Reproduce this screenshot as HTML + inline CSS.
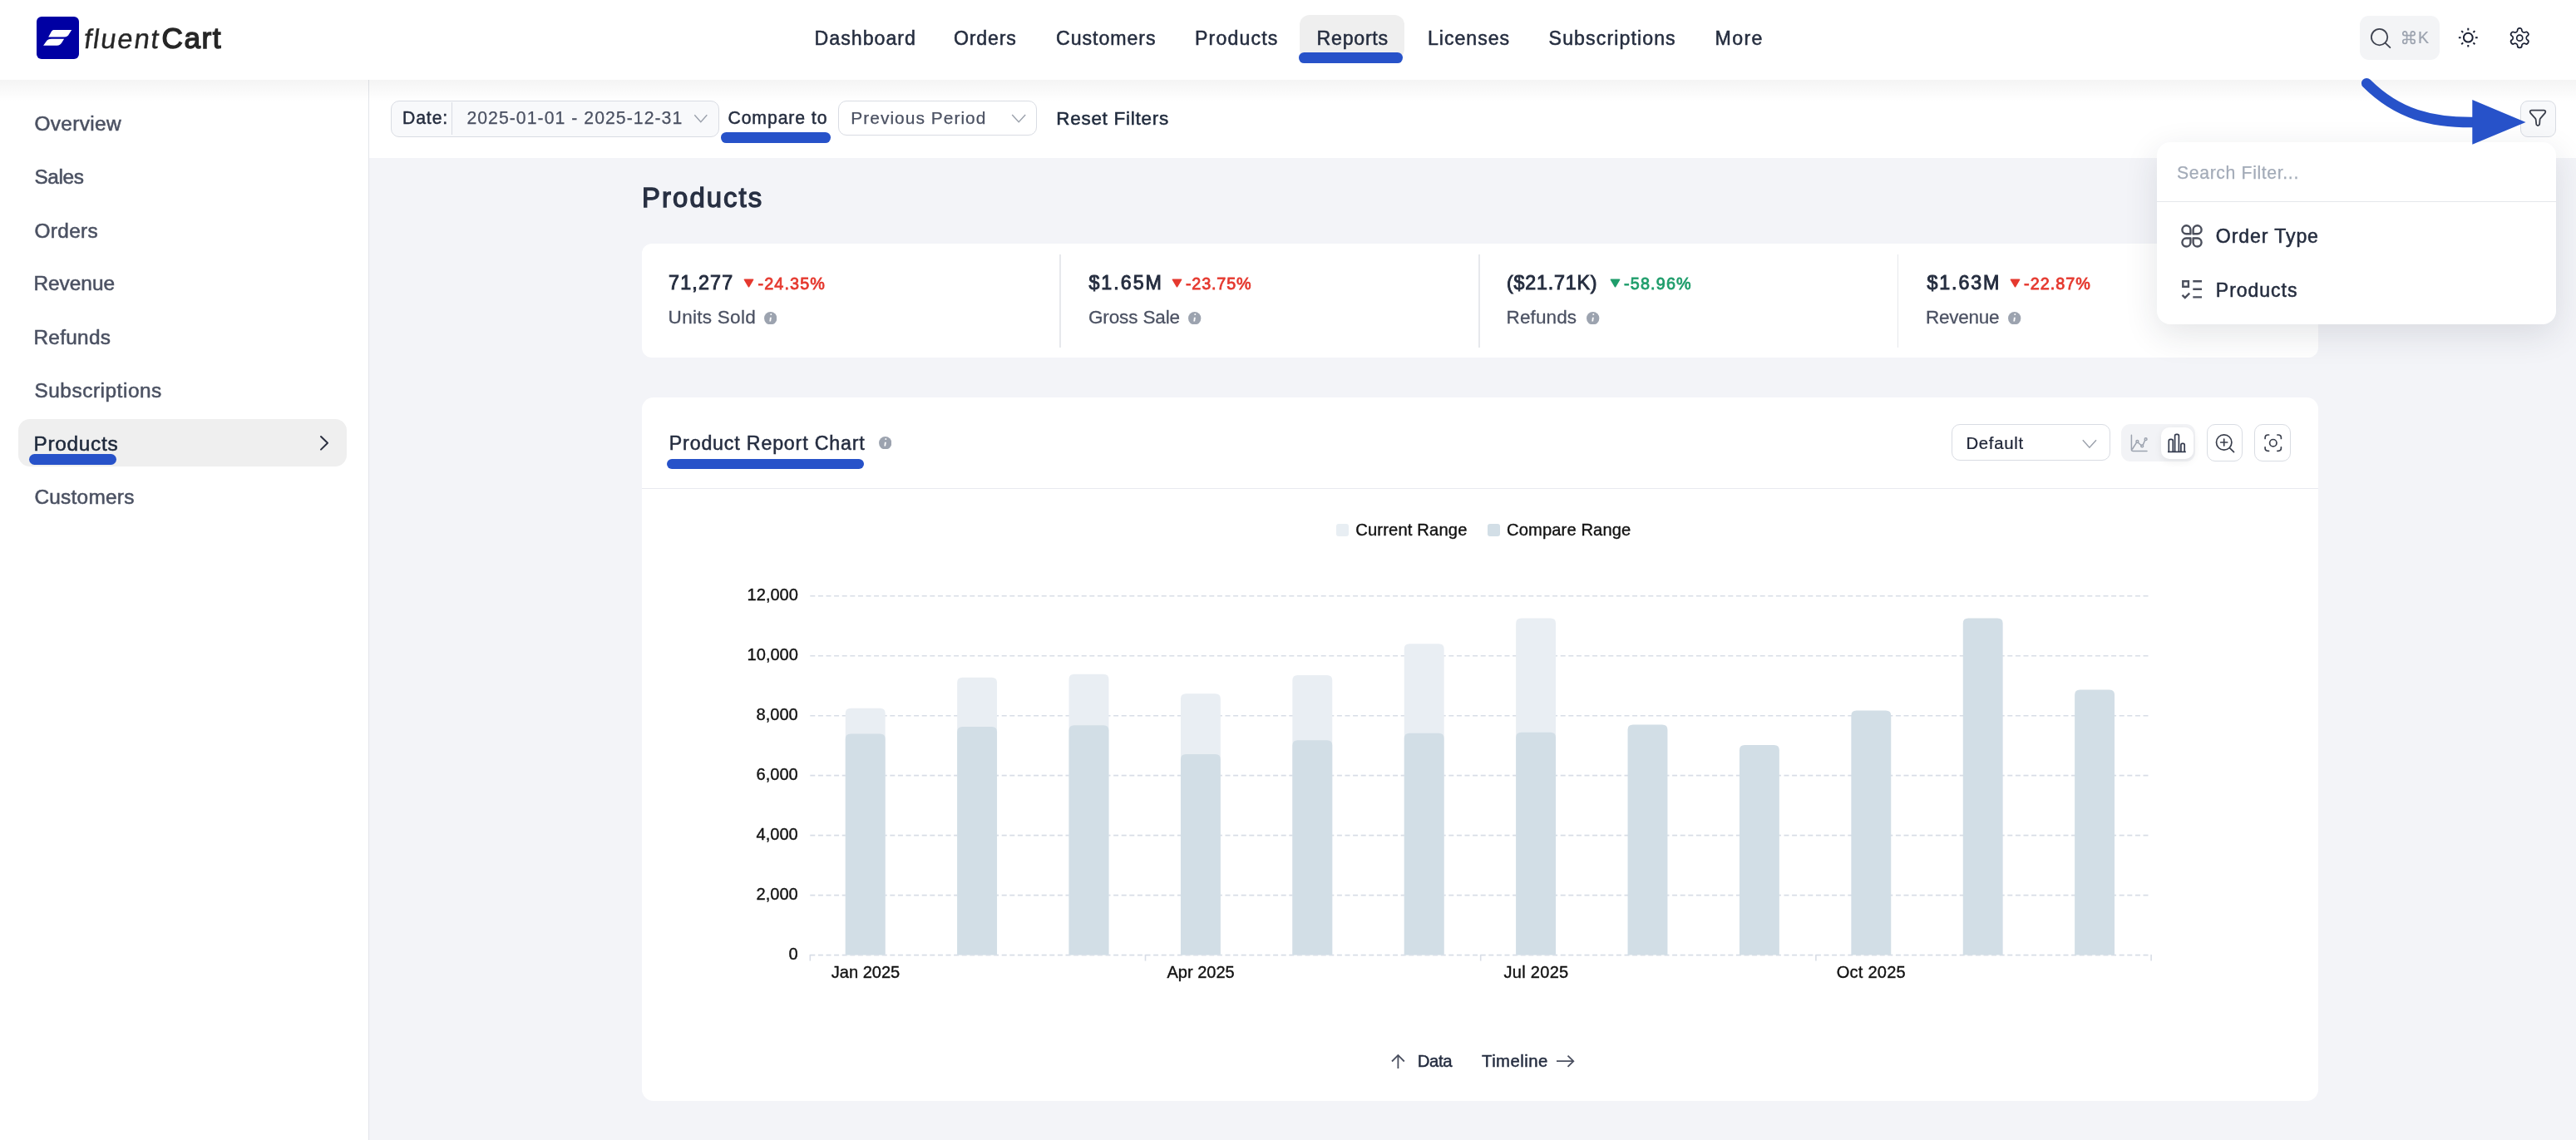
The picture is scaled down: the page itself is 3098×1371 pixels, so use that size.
<!DOCTYPE html><html><head><meta charset="utf-8"><style>
*{margin:0;padding:0;box-sizing:border-box}
html,body{width:3098px;height:1371px;overflow:hidden;background:#f3f4f8;font-family:"Liberation Sans",sans-serif}
.a{position:absolute}
.t{position:absolute;line-height:1;white-space:nowrap}
.bar{position:absolute;background:#2752c9;border-radius:7px}
</style></head><body><div style="position:absolute;left:0;top:0;width:3098px;height:1371px;will-change:transform">

<div class="a" style="left:0;top:0;width:3098px;height:96px;background:#fff"></div>
<div class="a" style="left:0;top:96px;width:444px;height:1275px;background:#fff;border-right:1px solid #e3e5ea"></div>
<div class="a" style="left:444px;top:96px;width:2654px;height:94px;background:#fff"></div>
<div class="a" style="left:0;top:96px;width:3098px;height:26px;background:linear-gradient(rgba(0,0,0,0.045),rgba(0,0,0,0))"></div>
<svg class="a" style="left:0;top:0" width="300" height="96" viewBox="0 0 300 96">
<rect x="44" y="20" width="51" height="51" rx="6" fill="#0000a3"/>
<path d="M64.5 35.9 L86.2 35.9 L83 41 Q81.5 44.4 77.5 44.4 L58.2 44.5 L61 39.5 Q62.5 35.9 64.5 35.9Z" fill="#fff"/>
<path d="M62 46.8 L77.1 46.8 L74.5 51 Q72.5 54.7 68.5 54.7 L52.1 54.7 L55.5 50 Q57.5 46.8 62 46.8Z" fill="#fff"/>
</svg>
<div class="a" style="left:1562.5px;top:18px;width:126px;height:53px;border-radius:12px;background:#efefef"></div>
<div class="a" style="left:2838px;top:19px;width:96px;height:53px;border-radius:11px;background:#f3f4f6"></div>
<svg class="a" style="left:2840px;top:25px" width="260" height="45" viewBox="2840 25 260 45">
<circle cx="2861.6" cy="44.6" r="9.7" fill="none" stroke="#3f4350" stroke-width="1.8"/>
<path d="M2868.8 51.8 L2874.4 57.2" stroke="#3f4350" stroke-width="1.8" stroke-linecap="round"/>
<g transform="translate(2887.4 35.5) scale(0.80)" fill="none" stroke="#9ca3af" stroke-width="2.1" stroke-linecap="round" stroke-linejoin="round">
<path d="M15 6v12a3 3 0 1 0 3-3H6a3 3 0 1 0 3 3V6a3 3 0 1 0-3 3h12a3 3 0 1 0-3-3"/></g>
<g fill="none" stroke="#1a2033" stroke-width="2"><circle cx="2968.3" cy="45.2" r="5.4"/><path d="M2977.00 45.20L2979.70 45.20M2974.45 51.35L2976.36 53.26M2968.30 53.90L2968.30 56.60M2962.15 51.35L2960.24 53.26M2959.60 45.20L2956.90 45.20M2962.15 39.05L2960.24 37.14M2968.30 36.50L2968.30 33.80M2974.45 39.05L2976.36 37.14" stroke-width="2"/></g>
<g transform="translate(3016.2 31.6) scale(1.17)" fill="none" stroke="#1a2033" stroke-width="1.45" stroke-linecap="round" stroke-linejoin="round">
<path d="M12.22 2h-.44a2 2 0 0 0-2 2v.18a2 2 0 0 1-1 1.73l-.43.25a2 2 0 0 1-2 0l-.15-.08a2 2 0 0 0-2.73.73l-.22.38a2 2 0 0 0 .73 2.73l.15.1a2 2 0 0 1 1 1.72v.51a2 2 0 0 1-1 1.74l-.15.09a2 2 0 0 0-.73 2.73l.22.38a2 2 0 0 0 2.730.73l.15-.08a2 2 0 0 1 2 0l.43.25a2 2 0 0 1 1 1.73V20a2 2 0 0 0 2 2h.44a2 2 0 0 0 2-2v-.18a2 2 0 0 1 1-1.73l.43-.25a2 2 0 0 1 2 0l.15.08a2 2 0 0 0 2.73-.73l.22-.39a2 2 0 0 0-.73-2.73l-.15-.08a2 2 0 0 1-1-1.74v-.5a2 2 0 0 1 1-1.74l.15-.09a2 2 0 0 0 .73-2.73l-.22-.38a2 2 0 0 0-2.73-.73l-.15.08a2 2 0 0 1-2 0l-.43-.25a2 2 0 0 1-1-1.73V4a2 2 0 0 0-2-2z"/>
<circle cx="12" cy="12" r="3"/></g>
</svg>
<div class="a" style="left:470px;top:120.5px;width:394.5px;height:44px;border-radius:10px;background:#f8f9fb;border:1.5px solid #d9dce3"></div>
<div class="a" style="left:542.7px;top:123px;width:1.5px;height:39px;background:#d9dce3"></div>
<div class="a" style="left:1007.5px;top:121.3px;width:239px;height:42.2px;border-radius:10px;background:#fff;border:1.5px solid #d9dce3"></div>
<div class="a" style="left:3030.5px;top:120.5px;width:43px;height:44px;border-radius:9px;background:#f8f9fb;border:1.5px solid #d9dce3"></div>
<svg class="a" style="left:800px;top:120px" width="500" height="40" viewBox="800 120 500 40">
<path d="M835.3 138.3 L842.8 146.6 L850.3 138.3" fill="none" stroke="#9aa0ab" stroke-width="1.4"/>
<path d="M1217.2 138 L1225.2 146.8 L1233.2 138" fill="none" stroke="#9aa0ab" stroke-width="1.4"/>
</svg>
<svg class="a" style="left:3035px;top:125px" width="35" height="35" viewBox="3035 125 35 35">
<path d="M3044.5 132.7 L3059.5 132.7 Q3062.2 133 3060.8 135.8 L3055.2 142.3 Q3054.5 143.2 3054.5 144.5 L3054.2 149 Q3053.8 151.3 3051.8 151 Q3050 150.5 3050.2 148.6 L3049.8 144.5 Q3049.8 143.2 3049 142.3 L3043.2 135.8 Q3041.8 133 3044.5 132.7Z" fill="none" stroke="#3a3f4c" stroke-width="1.8" stroke-linejoin="round"/>
</svg>
<div class="a" style="left:22px;top:504px;width:395px;height:57px;border-radius:14px;background:#efefef"></div>
<svg class="a" style="left:380px;top:520px" width="20" height="26" viewBox="380 520 20 26">
<path d="M386 525 L394 532.8 L386 540.6" fill="none" stroke="#2b3040" stroke-width="2" stroke-linecap="round" stroke-linejoin="round"/></svg>
<div class="a" style="left:772px;top:292.5px;width:2016px;height:137px;border-radius:12px;background:#fff"></div>
<div class="a" style="left:1274.0px;top:306px;width:1.5px;height:112px;background:#e6e8ec"></div>
<div class="a" style="left:1778.2px;top:306px;width:1.5px;height:112px;background:#e6e8ec"></div>
<div class="a" style="left:2281.8px;top:306px;width:1.5px;height:112px;background:#e6e8ec"></div>
<div class="a" style="left:772px;top:478px;width:2016px;height:846px;border-radius:14px;background:#fff"></div>
<div class="a" style="left:772px;top:586.5px;width:2016px;height:1.5px;background:#e8eaef"></div>
<div class="a" style="left:2346.5px;top:510px;width:191px;height:44px;border-radius:10px;background:#fff;border:1.5px solid #d9dce3"></div>
<div class="a" style="left:2551px;top:510px;width:89px;height:45px;border-radius:11px;background:#f2f3f6"></div>
<div class="a" style="left:2599px;top:513.8px;width:39px;height:38.2px;border-radius:10px;background:#fff;box-shadow:0 3px 10px rgba(0,0,0,0.07)"></div>
<div class="a" style="left:2654.3px;top:510px;width:43.2px;height:45px;border-radius:10px;background:#fff;border:1.5px solid #d9dce3"></div>
<div class="a" style="left:2711.4px;top:510px;width:44px;height:45px;border-radius:10px;background:#fff;border:1.5px solid #d9dce3"></div>
<svg class="a" style="left:2490px;top:510px" width="270" height="45" viewBox="2490 510 270 45">
<path d="M2504.8 529.2 L2512.9 538.2 L2521 529.2" fill="none" stroke="#9aa0ab" stroke-width="1.4"/>
<g fill="none" stroke="#9ca3af" stroke-width="1.5" stroke-linecap="round" stroke-linejoin="round">
<path d="M2563.4 523.3 V540.5 Q2563.4 542.5 2565.4 542.5 H2582"/>
<path d="M2564.5 540 L2569.4 532.3 M2571.3 532.2 L2575.3 535.8 M2577.2 535.2 L2579.6 529.5"/>
<circle cx="2570.4" cy="531" r="1.4"/><circle cx="2576.2" cy="536.4" r="1.4"/><circle cx="2580.6" cy="528.2" r="1.4"/>
</g>
<g fill="none" stroke="#333a4d" stroke-width="1.7" stroke-linejoin="round">
<path d="M2608.3 543 V530.2 Q2608.3 528.3 2610.2 528.3 H2611.4 Q2613.3 528.3 2613.3 530.2 V543"/>
<path d="M2615.6 543 V524 Q2615.6 522.3 2617.4 522.3 H2618.6 Q2620.4 522.3 2620.4 524 V543"/>
<path d="M2622.9 543 V535 Q2622.9 533.3 2624.6 533.3 H2625.5 Q2627.2 533.3 2627.2 535 V543"/>
<path d="M2607 543.4 H2628.8"/>
</g>
<g fill="none" stroke="#3a3f4c" stroke-width="1.7" stroke-linecap="round">
<circle cx="2674.7" cy="532" r="9.2"/>
<path d="M2681.4 538.7 L2686.5 543.6 M2674.7 528 V536 M2670.7 532 H2678.7"/>
</g>
<g fill="none" stroke="#3a3f4c" stroke-width="1.7" stroke-linecap="round">
<path d="M2724.1 527.5 V526.5 Q2724.1 523 2727.6 523 H2728.6 M2738.9 523 H2739.9 Q2743.4 523 2743.4 526.5 V527.5 M2743.4 537.8 V538.8 Q2743.4 542.3 2739.9 542.3 H2738.9 M2728.6 542.3 H2727.6 Q2724.1 542.3 2724.1 538.8 V537.8"/>
<circle cx="2733.8" cy="532.7" r="4.2"/>
</g>
</svg>
<div class="a" style="left:1606.7px;top:629.7px;width:15.5px;height:15.5px;border-radius:3px;background:#e8eef3"></div>
<div class="a" style="left:1788.5px;top:629.7px;width:15.9px;height:15.5px;border-radius:3px;background:#d2dee6"></div>
<svg class="a" style="left:0;top:0" width="3098" height="1371" viewBox="0 0 3098 1371">
<line x1="974.3" y1="1148.60" x2="2585" y2="1148.60" stroke="#d8dde6" stroke-width="1.6" stroke-dasharray="6 3.6"/>
<line x1="974.3" y1="1076.62" x2="2585" y2="1076.62" stroke="#d8dde6" stroke-width="1.6" stroke-dasharray="6 3.6"/>
<line x1="974.3" y1="1004.64" x2="2585" y2="1004.64" stroke="#d8dde6" stroke-width="1.6" stroke-dasharray="6 3.6"/>
<line x1="974.3" y1="932.66" x2="2585" y2="932.66" stroke="#d8dde6" stroke-width="1.6" stroke-dasharray="6 3.6"/>
<line x1="974.3" y1="860.68" x2="2585" y2="860.68" stroke="#d8dde6" stroke-width="1.6" stroke-dasharray="6 3.6"/>
<line x1="974.3" y1="788.70" x2="2585" y2="788.70" stroke="#d8dde6" stroke-width="1.6" stroke-dasharray="6 3.6"/>
<line x1="974.3" y1="716.72" x2="2585" y2="716.72" stroke="#d8dde6" stroke-width="1.6" stroke-dasharray="6 3.6"/>
<line x1="974.30" y1="1148" x2="974.30" y2="1155.6" stroke="#d8dde6" stroke-width="1.6"/>
<line x1="1377.50" y1="1148" x2="1377.50" y2="1155.6" stroke="#d8dde6" stroke-width="1.6"/>
<line x1="1780.70" y1="1148" x2="1780.70" y2="1155.6" stroke="#d8dde6" stroke-width="1.6"/>
<line x1="2183.90" y1="1148" x2="2183.90" y2="1155.6" stroke="#d8dde6" stroke-width="1.6"/>
<line x1="2587.10" y1="1148" x2="2587.10" y2="1155.6" stroke="#d8dde6" stroke-width="1.6"/>
<path d="M1016.75 1148.60 V858.00 Q1016.75 851.70 1023.05 851.70 H1058.35 Q1064.65 851.70 1064.65 858.00 V1148.60 Z" fill="#e9eef3"/>
<path d="M1151.15 1148.60 V821.00 Q1151.15 814.70 1157.45 814.70 H1192.75 Q1199.05 814.70 1199.05 821.00 V1148.60 Z" fill="#e9eef3"/>
<path d="M1285.55 1148.60 V817.10 Q1285.55 810.80 1291.85 810.80 H1327.15 Q1333.45 810.80 1333.45 817.10 V1148.60 Z" fill="#e9eef3"/>
<path d="M1419.95 1148.60 V840.60 Q1419.95 834.30 1426.25 834.30 H1461.55 Q1467.85 834.30 1467.85 840.60 V1148.60 Z" fill="#e9eef3"/>
<path d="M1554.35 1148.60 V818.20 Q1554.35 811.90 1560.65 811.90 H1595.95 Q1602.25 811.90 1602.25 818.20 V1148.60 Z" fill="#e9eef3"/>
<path d="M1688.75 1148.60 V780.50 Q1688.75 774.20 1695.05 774.20 H1730.35 Q1736.65 774.20 1736.65 780.50 V1148.60 Z" fill="#e9eef3"/>
<path d="M1823.15 1148.60 V749.70 Q1823.15 743.40 1829.45 743.40 H1864.75 Q1871.05 743.40 1871.05 749.70 V1148.60 Z" fill="#e9eef3"/>
<path d="M1016.75 1148.60 V888.80 Q1016.75 882.50 1023.05 882.50 H1058.35 Q1064.65 882.50 1064.65 888.80 V1148.60 Z" fill="#d2dee6"/>
<path d="M1151.15 1148.60 V880.40 Q1151.15 874.10 1157.45 874.10 H1192.75 Q1199.05 874.10 1199.05 880.40 V1148.60 Z" fill="#d2dee6"/>
<path d="M1285.55 1148.60 V878.60 Q1285.55 872.30 1291.85 872.30 H1327.15 Q1333.45 872.30 1333.45 878.60 V1148.60 Z" fill="#d2dee6"/>
<path d="M1419.95 1148.60 V913.30 Q1419.95 907.00 1426.25 907.00 H1461.55 Q1467.85 907.00 1467.85 913.30 V1148.60 Z" fill="#d2dee6"/>
<path d="M1554.35 1148.60 V896.50 Q1554.35 890.20 1560.65 890.20 H1595.95 Q1602.25 890.20 1602.25 896.50 V1148.60 Z" fill="#d2dee6"/>
<path d="M1688.75 1148.60 V888.10 Q1688.75 881.80 1695.05 881.80 H1730.35 Q1736.65 881.80 1736.65 888.10 V1148.60 Z" fill="#d2dee6"/>
<path d="M1823.15 1148.60 V887.00 Q1823.15 880.70 1829.45 880.70 H1864.75 Q1871.05 880.70 1871.05 887.00 V1148.60 Z" fill="#d2dee6"/>
<path d="M1957.55 1148.60 V877.80 Q1957.55 871.50 1963.85 871.50 H1999.15 Q2005.45 871.50 2005.45 877.80 V1148.60 Z" fill="#d2dee6"/>
<path d="M2091.95 1148.60 V902.20 Q2091.95 895.90 2098.25 895.90 H2133.55 Q2139.85 895.90 2139.85 902.20 V1148.60 Z" fill="#d2dee6"/>
<path d="M2226.35 1148.60 V860.90 Q2226.35 854.60 2232.65 854.60 H2267.95 Q2274.25 854.60 2274.25 860.90 V1148.60 Z" fill="#d2dee6"/>
<path d="M2360.75 1148.60 V749.70 Q2360.75 743.40 2367.05 743.40 H2402.35 Q2408.65 743.40 2408.65 749.70 V1148.60 Z" fill="#d2dee6"/>
<path d="M2495.15 1148.60 V835.90 Q2495.15 829.60 2501.45 829.60 H2536.75 Q2543.05 829.60 2543.05 835.90 V1148.60 Z" fill="#d2dee6"/>
<g fill="none" stroke="#4b5060" stroke-width="1.8" stroke-linecap="butt"><path d="M1681.4 1285 V1269.5 M1674 1276.5 L1681.4 1269 L1688.8 1276.5"/><path d="M1872 1276.2 H1892.5 M1885.5 1269.6 L1892.3 1276.2 L1885.5 1282.8"/></g>
</svg>
<div class="a" style="left:2594px;top:171px;width:480px;height:219px;border-radius:16px;background:#fff;box-shadow:0 12px 40px rgba(30,40,60,0.12)"></div>
<div class="a" style="left:2594px;top:241.5px;width:480px;height:1px;background:#e5e7eb"></div>
<svg class="a" style="left:2615px;top:265px" width="40" height="100" viewBox="2615 265 40 100">
<g fill="none" stroke="#4b4f5c" stroke-width="2.4" stroke-linejoin="round">
<path d="M2634.4 281.3 H2629.2 A5 5 0 1 1 2634.4 276.1 Z"/>
<path d="M2637.6 281.3 H2642.8 A5 5 0 1 0 2637.6 276.1 Z"/>
<path d="M2634.4 286.5 H2629.2 A5 5 0 1 0 2634.4 291.7 Z"/>
<path d="M2637.6 286.5 H2642.8 A5 5 0 1 1 2637.6 291.7 Z"/>
</g>
<g fill="none" stroke="#4b4f5c" stroke-width="2.4">
<rect x="2625.3" y="338.2" width="6.6" height="6.6"/>
<path d="M2637.3 338.3 H2648 M2637.3 347.8 H2648 M2637.3 357.4 H2648"/>
<path d="M2624.5 354.8 L2627.8 358 L2633.2 352.6" stroke-linecap="butt"/>
</g></svg>
<div class="bar" style="left:1561.7px;top:63.4px;width:125.3px;height:12.8px;border-radius:6.4px"></div>
<div class="bar" style="left:866.7px;top:159.4px;width:132.3px;height:12.8px;border-radius:6.4px"></div>
<div class="bar" style="left:34.7px;top:546.0px;width:105.3px;height:13.0px;border-radius:6.5px"></div>
<div class="bar" style="left:801.7px;top:551.6px;width:237.3px;height:12.6px;border-radius:6.3px"></div>
<svg class="a" style="left:2830px;top:90px" width="220" height="90" viewBox="2830 90 220 90">
<path d="M2846.2 100.2 C2884 138 2925 147.5 2975 147" fill="none" stroke="#2752c9" stroke-width="12.5" stroke-linecap="round"/>
<path d="M2973.3 120 L3037.5 147 L2973.3 173.8 Z" fill="#2752c9"/>
</svg>
<div class="t" id="fluent" style="left:100.00px;top:30.80px;font-size:32.95px;font-weight:normal;color:#262626;letter-spacing:1.800px;-webkit-text-stroke:0.40px #262626;transform:skewX(-8deg);transform-origin:0 80%;">fluent</div>
<div class="t" id="cart" style="left:194.50px;top:28.20px;font-size:35.17px;font-weight:normal;color:#262626;letter-spacing:1.500px;-webkit-text-stroke:1.41px #262626;">Cart</div>
<div class="t" id="nav0" style="left:979.60px;top:35.00px;font-size:23.18px;font-weight:normal;color:#252d3f;letter-spacing:1.000px;-webkit-text-stroke:0.51px #252d3f;">Dashboard</div>
<div class="t" id="nav1" style="left:1147.00px;top:35.00px;font-size:23.18px;font-weight:normal;color:#252d3f;letter-spacing:0.800px;-webkit-text-stroke:0.51px #252d3f;">Orders</div>
<div class="t" id="nav2" style="left:1270.00px;top:35.00px;font-size:23.18px;font-weight:normal;color:#252d3f;letter-spacing:0.950px;-webkit-text-stroke:0.51px #252d3f;">Customers</div>
<div class="t" id="nav3" style="left:1437.00px;top:35.00px;font-size:23.18px;font-weight:normal;color:#252d3f;letter-spacing:1.143px;-webkit-text-stroke:0.51px #252d3f;">Products</div>
<div class="t" id="nav4" style="left:1583.60px;top:35.00px;font-size:23.18px;font-weight:normal;color:#252d3f;letter-spacing:0.733px;-webkit-text-stroke:0.51px #252d3f;">Reports</div>
<div class="t" id="nav5" style="left:1717.00px;top:35.00px;font-size:23.18px;font-weight:normal;color:#252d3f;letter-spacing:0.957px;-webkit-text-stroke:0.51px #252d3f;">Licenses</div>
<div class="t" id="nav6" style="left:1862.60px;top:35.00px;font-size:23.18px;font-weight:normal;color:#252d3f;letter-spacing:1.083px;-webkit-text-stroke:0.51px #252d3f;">Subscriptions</div>
<div class="t" id="nav7" style="left:2062.50px;top:35.00px;font-size:23.18px;font-weight:normal;color:#252d3f;letter-spacing:1.400px;-webkit-text-stroke:0.51px #252d3f;">More</div>
<div class="t" id="kbdK" style="left:2908.00px;top:35.70px;font-size:19.48px;font-weight:normal;color:#9ca3af;letter-spacing:0.000px;-webkit-text-stroke:0.23px #9ca3af;">K</div>
<div class="t" id="date" style="left:484.00px;top:131.20px;font-size:21.22px;font-weight:normal;color:#252d3f;letter-spacing:0.875px;-webkit-text-stroke:0.47px #252d3f;">Date:</div>
<div class="t" id="dateval" style="left:561.40px;top:131.20px;font-size:21.22px;font-weight:normal;color:#4b5162;letter-spacing:1.041px;-webkit-text-stroke:0.25px #4b5162;">2025-01-01 - 2025-12-31</div>
<div class="t" id="cmp" style="left:875.40px;top:131.20px;font-size:21.22px;font-weight:normal;color:#252d3f;letter-spacing:0.911px;-webkit-text-stroke:0.47px #252d3f;">Compare to</div>
<div class="t" id="prev" style="left:1023.30px;top:132.00px;font-size:20.93px;font-weight:normal;color:#4b5162;letter-spacing:1.029px;-webkit-text-stroke:0.25px #4b5162;">Previous Period</div>
<div class="t" id="reset" style="left:1270.20px;top:131.80px;font-size:22.53px;font-weight:normal;color:#1f2a3c;letter-spacing:0.717px;-webkit-text-stroke:0.50px #1f2a3c;">Reset Filters</div>
<div class="t" id="side0" style="left:41.40px;top:137.00px;font-size:24.42px;font-weight:normal;color:#4b5162;letter-spacing:0.343px;-webkit-text-stroke:0.54px #4b5162;">Overview</div>
<div class="t" id="side1" style="left:41.40px;top:201.00px;font-size:24.42px;font-weight:normal;color:#4b5162;letter-spacing:-0.400px;-webkit-text-stroke:0.54px #4b5162;">Sales</div>
<div class="t" id="side2" style="left:41.40px;top:266.00px;font-size:24.42px;font-weight:normal;color:#4b5162;letter-spacing:0.360px;-webkit-text-stroke:0.54px #4b5162;">Orders</div>
<div class="t" id="side3" style="left:40.40px;top:329.00px;font-size:24.42px;font-weight:normal;color:#4b5162;letter-spacing:0.000px;-webkit-text-stroke:0.54px #4b5162;">Revenue</div>
<div class="t" id="side4" style="left:40.40px;top:394.00px;font-size:24.42px;font-weight:normal;color:#4b5162;letter-spacing:0.283px;-webkit-text-stroke:0.54px #4b5162;">Refunds</div>
<div class="t" id="side5" style="left:41.40px;top:458.00px;font-size:24.42px;font-weight:normal;color:#4b5162;letter-spacing:0.533px;-webkit-text-stroke:0.54px #4b5162;">Subscriptions</div>
<div class="t" id="side6" style="left:40.40px;top:522.00px;font-size:24.42px;font-weight:normal;color:#1e293b;letter-spacing:0.714px;-webkit-text-stroke:0.54px #1e293b;">Products</div>
<div class="t" id="side7" style="left:41.40px;top:586.00px;font-size:24.42px;font-weight:normal;color:#4b5162;letter-spacing:0.250px;-webkit-text-stroke:0.54px #4b5162;">Customers</div>
<div class="t" id="h1" style="left:772.00px;top:222.20px;font-size:32.85px;font-weight:normal;color:#283043;letter-spacing:2.100px;-webkit-text-stroke:1.31px #283043;">Products</div>
<div class="t" id="ctitle" style="left:804.80px;top:521.80px;font-size:23.18px;font-weight:normal;color:#252d40;letter-spacing:0.842px;-webkit-text-stroke:0.51px #252d40;">Product Report Chart</div>
<div class="t" id="default" style="left:2364.40px;top:522.80px;font-size:20.35px;font-weight:normal;color:#1e2436;letter-spacing:0.700px;-webkit-text-stroke:0.24px #1e2436;">Default</div>
<div class="t" id="leg1" style="left:1630.20px;top:627.00px;font-size:20.20px;font-weight:normal;color:#111111;letter-spacing:0.150px;-webkit-text-stroke:0.36px #111111;">Current Range</div>
<div class="t" id="leg2" style="left:1812.00px;top:627.00px;font-size:20.20px;font-weight:normal;color:#111111;letter-spacing:0.100px;-webkit-text-stroke:0.36px #111111;">Compare Range</div>
<div class="t" id="y0" style="left:948.60px;top:1137.10px;font-size:20.06px;font-weight:normal;color:#111111;letter-spacing:0.000px;-webkit-text-stroke:0.36px #111111;">0</div>
<div class="t" id="y1" style="left:909.60px;top:1065.12px;font-size:20.06px;font-weight:normal;color:#111111;letter-spacing:0.000px;-webkit-text-stroke:0.36px #111111;">2,000</div>
<div class="t" id="y2" style="left:909.60px;top:993.14px;font-size:20.06px;font-weight:normal;color:#111111;letter-spacing:0.000px;-webkit-text-stroke:0.36px #111111;">4,000</div>
<div class="t" id="y3" style="left:909.60px;top:921.16px;font-size:20.06px;font-weight:normal;color:#111111;letter-spacing:0.000px;-webkit-text-stroke:0.36px #111111;">6,000</div>
<div class="t" id="y4" style="left:909.60px;top:849.18px;font-size:20.06px;font-weight:normal;color:#111111;letter-spacing:0.000px;-webkit-text-stroke:0.36px #111111;">8,000</div>
<div class="t" id="y5" style="left:898.60px;top:777.20px;font-size:20.06px;font-weight:normal;color:#111111;letter-spacing:0.000px;-webkit-text-stroke:0.36px #111111;">10,000</div>
<div class="t" id="y6" style="left:898.60px;top:705.22px;font-size:20.06px;font-weight:normal;color:#111111;letter-spacing:0.000px;-webkit-text-stroke:0.36px #111111;">12,000</div>
<div class="t" id="x0" style="left:999.70px;top:1159.00px;font-size:20.06px;font-weight:normal;color:#111111;letter-spacing:0.014px;-webkit-text-stroke:0.36px #111111;">Jan 2025</div>
<div class="t" id="x3" style="left:1403.40px;top:1159.00px;font-size:20.06px;font-weight:normal;color:#111111;letter-spacing:0.000px;-webkit-text-stroke:0.36px #111111;">Apr 2025</div>
<div class="t" id="x6" style="left:1808.60px;top:1159.00px;font-size:20.06px;font-weight:normal;color:#111111;letter-spacing:0.257px;-webkit-text-stroke:0.36px #111111;">Jul 2025</div>
<div class="t" id="x9" style="left:2208.80px;top:1159.00px;font-size:20.06px;font-weight:normal;color:#111111;letter-spacing:0.229px;-webkit-text-stroke:0.36px #111111;">Oct 2025</div>
<div class="t" id="data" style="left:1704.80px;top:1266.00px;font-size:20.35px;font-weight:normal;color:#252d40;letter-spacing:-0.400px;-webkit-text-stroke:0.45px #252d40;">Data</div>
<div class="t" id="timeline" style="left:1782.00px;top:1266.00px;font-size:20.35px;font-weight:normal;color:#252d40;letter-spacing:0.457px;-webkit-text-stroke:0.45px #252d40;">Timeline</div>
<div class="t" id="search" style="left:2618.00px;top:197.20px;font-size:21.22px;font-weight:normal;color:#a3abb8;letter-spacing:0.633px;-webkit-text-stroke:0.25px #a3abb8;">Search Filter...</div>
<div class="t" id="ot" style="left:2664.80px;top:273.00px;font-size:23.11px;font-weight:normal;color:#252d3f;letter-spacing:0.889px;-webkit-text-stroke:0.51px #252d3f;">Order Type</div>
<div class="t" id="prod" style="left:2664.80px;top:337.50px;font-size:23.11px;font-weight:normal;color:#252d3f;letter-spacing:0.929px;-webkit-text-stroke:0.51px #252d3f;">Products</div>
<div class="t" style="left:804.00px;top:329.20px;font-size:23.26px;color:#252d3f;letter-spacing:1.200px;-webkit-text-stroke:0.93px #252d3f">71,277</div>
<svg class="a" style="left:893.9px;top:334.8px" width="13" height="11" viewBox="0 0 13 11"><path d="M1.6 0.4 H11.4 Q12.9 0.4 12.2 1.8 L7.3 9.9 Q6.5 11 5.7 9.9 L0.8 1.8 Q0.1 0.4 1.6 0.4Z" fill="#e5392f"/></svg>
<div class="t" style="left:911.60px;top:331.90px;font-size:19.77px;color:#e5392f;letter-spacing:1.100px;-webkit-text-stroke:0.79px #e5392f">-24.35%</div>
<div class="t" style="left:803.60px;top:371.00px;font-size:22.53px;color:#4b5162;letter-spacing:0.278px;-webkit-text-stroke:0.27px #4b5162">Units Sold</div>
<svg class="a" style="left:918.9px;top:375.0px" width="15.4" height="15.4" viewBox="0 0 16 16"><circle cx="8" cy="8" r="8" fill="#9ca3af"/><path d="M8.6 4.2 a1 1 0 1 1 0.01 0z M7.2 7 L9.2 7 L8.4 12 L6.6 12Z" fill="#fff"/></svg>
<div class="t" style="left:1309.40px;top:329.20px;font-size:23.26px;color:#252d3f;letter-spacing:2.000px;-webkit-text-stroke:0.93px #252d3f">$1.65M</div>
<svg class="a" style="left:1408.8px;top:334.8px" width="13" height="11" viewBox="0 0 13 11"><path d="M1.6 0.4 H11.4 Q12.9 0.4 12.2 1.8 L7.3 9.9 Q6.5 11 5.7 9.9 L0.8 1.8 Q0.1 0.4 1.6 0.4Z" fill="#e5392f"/></svg>
<div class="t" style="left:1425.90px;top:331.90px;font-size:19.77px;color:#e5392f;letter-spacing:0.850px;-webkit-text-stroke:0.79px #e5392f">-23.75%</div>
<div class="t" style="left:1309.00px;top:371.00px;font-size:22.53px;color:#4b5162;letter-spacing:-0.144px;-webkit-text-stroke:0.27px #4b5162">Gross Sale</div>
<svg class="a" style="left:1429.2px;top:375.0px" width="15.4" height="15.4" viewBox="0 0 16 16"><circle cx="8" cy="8" r="8" fill="#9ca3af"/><path d="M8.6 4.2 a1 1 0 1 1 0.01 0z M7.2 7 L9.2 7 L8.4 12 L6.6 12Z" fill="#fff"/></svg>
<div class="t" style="left:1812.00px;top:329.20px;font-size:23.26px;color:#252d3f;letter-spacing:0.812px;-webkit-text-stroke:0.93px #252d3f">($21.71K)</div>
<svg class="a" style="left:1935.7px;top:334.8px" width="13" height="11" viewBox="0 0 13 11"><path d="M1.6 0.4 H11.4 Q12.9 0.4 12.2 1.8 L7.3 9.9 Q6.5 11 5.7 9.9 L0.8 1.8 Q0.1 0.4 1.6 0.4Z" fill="#1f9d6b"/></svg>
<div class="t" style="left:1953.00px;top:331.90px;font-size:19.77px;color:#1f9d6b;letter-spacing:1.167px;-webkit-text-stroke:0.79px #1f9d6b">-58.96%</div>
<div class="t" style="left:1811.60px;top:371.00px;font-size:22.53px;color:#4b5162;letter-spacing:0.100px;-webkit-text-stroke:0.27px #4b5162">Refunds</div>
<svg class="a" style="left:1908.2px;top:375.0px" width="15.4" height="15.4" viewBox="0 0 16 16"><circle cx="8" cy="8" r="8" fill="#9ca3af"/><path d="M8.6 4.2 a1 1 0 1 1 0.01 0z M7.2 7 L9.2 7 L8.4 12 L6.6 12Z" fill="#fff"/></svg>
<div class="t" style="left:2317.50px;top:329.20px;font-size:23.26px;color:#252d3f;letter-spacing:1.860px;-webkit-text-stroke:0.93px #252d3f">$1.63M</div>
<svg class="a" style="left:2417.0px;top:334.8px" width="13" height="11" viewBox="0 0 13 11"><path d="M1.6 0.4 H11.4 Q12.9 0.4 12.2 1.8 L7.3 9.9 Q6.5 11 5.7 9.9 L0.8 1.8 Q0.1 0.4 1.6 0.4Z" fill="#e5392f"/></svg>
<div class="t" style="left:2434.00px;top:331.90px;font-size:19.77px;color:#e5392f;letter-spacing:1.050px;-webkit-text-stroke:0.79px #e5392f">-22.87%</div>
<div class="t" style="left:2316.10px;top:371.00px;font-size:22.53px;color:#4b5162;letter-spacing:-0.283px;-webkit-text-stroke:0.27px #4b5162">Revenue</div>
<svg class="a" style="left:2415.2px;top:375.0px" width="15.4" height="15.4" viewBox="0 0 16 16"><circle cx="8" cy="8" r="8" fill="#9ca3af"/><path d="M8.6 4.2 a1 1 0 1 1 0.01 0z M7.2 7 L9.2 7 L8.4 12 L6.6 12Z" fill="#fff"/></svg>
<svg class="a" style="left:1057.1px;top:524.8px" width="15.4" height="15.4" viewBox="0 0 16 16"><circle cx="8" cy="8" r="8" fill="#9ca3af"/><path d="M8.6 4.2 a1 1 0 1 1 0.01 0z M7.2 7 L9.2 7 L8.4 12 L6.6 12Z" fill="#fff"/></svg>
</div></body></html>
